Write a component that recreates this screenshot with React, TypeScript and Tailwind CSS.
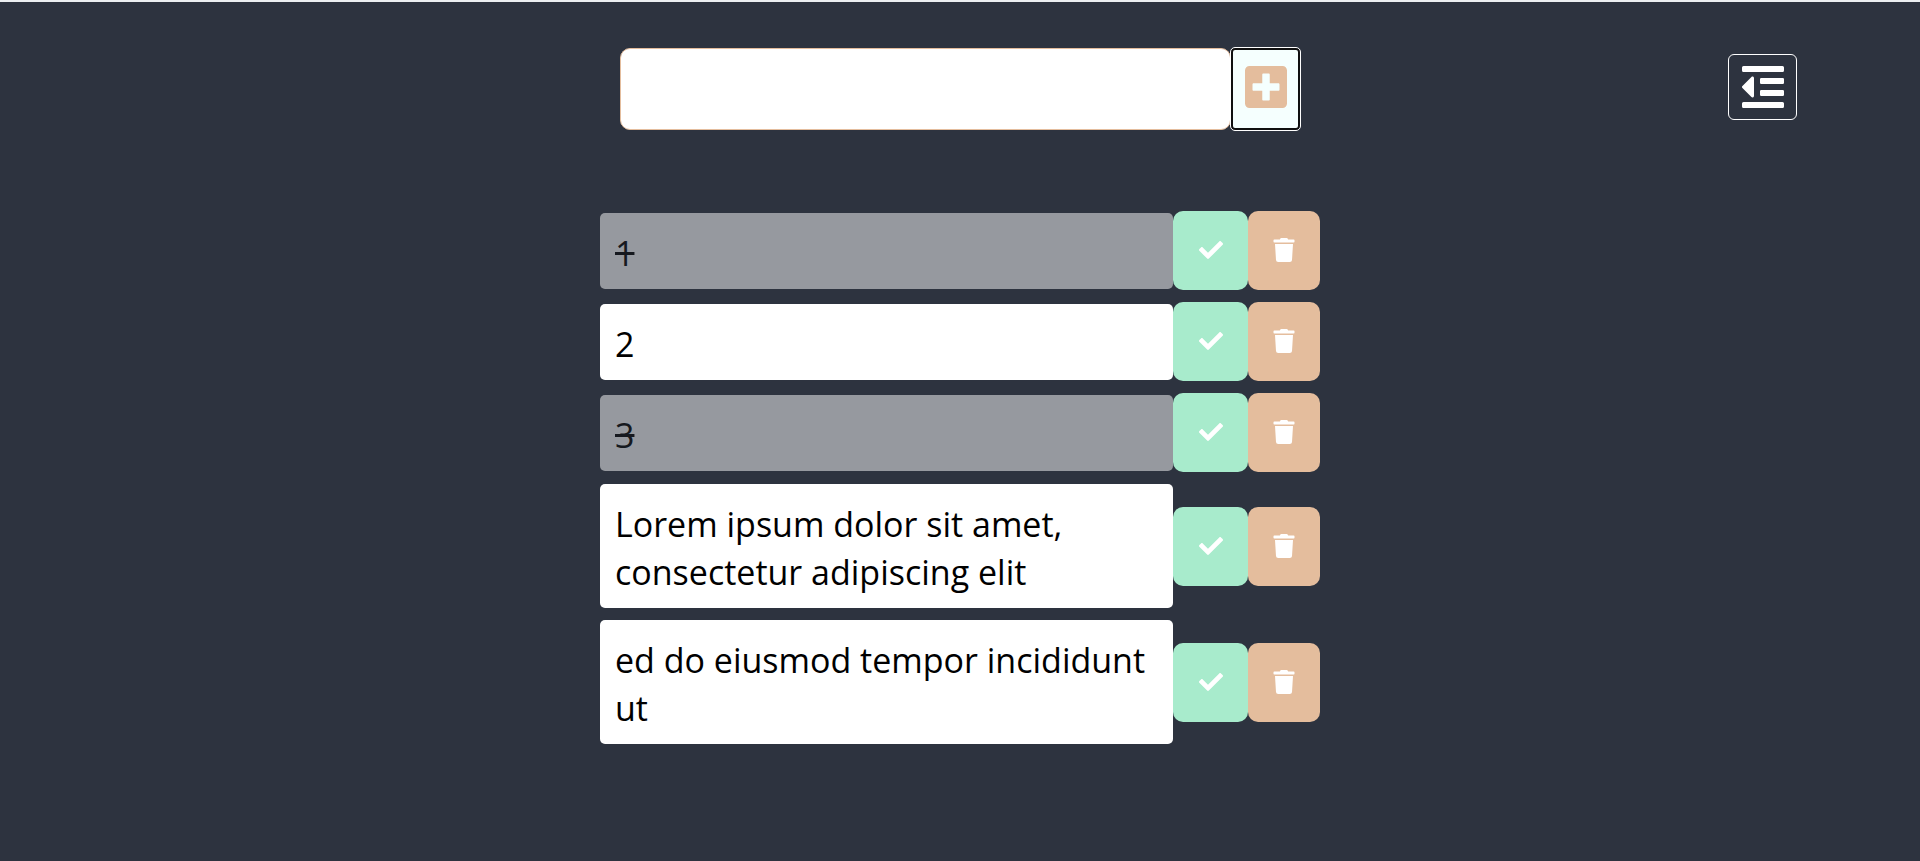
import { useState } from "react";
import type { FormEvent } from "react";
import { FaCheck, FaOutdent, FaPlusSquare, FaTrash } from "react-icons/fa";

type Todo = { id: number; text: string; done: boolean };

const initialTodos: Todo[] = [
  { id: 1, text: "1", done: true },
  { id: 2, text: "2", done: false },
  { id: 3, text: "3", done: true },
  { id: 4, text: "Lorem ipsum dolor sit amet, consectetur adipiscing elit", done: false },
  { id: 5, text: "ed do eiusmod tempor incididunt ut", done: false },
];

function TodoRow({ todo, onToggle, onRemove }: { todo: Todo; onToggle: () => void; onRemove: () => void }) {
  return (
    <li className="flex items-center">
      <p
        className={
          "min-w-0 flex-1 rounded-[5px] bg-white px-[15px] pt-4 pb-3 text-[34px] leading-[48px] text-black " +
          (todo.done ? "line-through opacity-50" : "")
        }
      >
        {todo.text}
      </p>
      <button
        type="button"
        aria-label="Complete"
        onClick={onToggle}
        className="flex h-[79px] w-[75px] shrink-0 items-center justify-center rounded-[10px] bg-[#a8ebcc] pb-px text-2xl text-white"
      >
        <FaCheck />
      </button>
      <button
        type="button"
        aria-label="Delete"
        onClick={onRemove}
        className="flex h-[79px] w-[72px] shrink-0 items-center justify-center rounded-[10px] bg-[#e4bd9d] pb-px text-2xl text-white"
      >
        <FaTrash />
      </button>
    </li>
  );
}

export default function App() {
  const [todos, setTodos] = useState(initialTodos);
  const [draft, setDraft] = useState("");

  const addTodo = (event: FormEvent) => {
    event.preventDefault();
    if (!draft.trim()) return;
    setTodos([...todos, { id: Date.now(), text: draft, done: false }]);
    setDraft("");
  };

  return (
    <div className="min-h-screen border-t-2 border-[#eceff1] bg-[#2d333f] font-['Open_Sans','Noto_Sans',sans-serif]">
      <header className="grid grid-cols-[1fr_680px_1fr] pt-[46px]">
        <form onSubmit={addTodo} className="col-start-2 flex">
          <input
            type="text"
            aria-label="New task"
            value={draft}
            onChange={(event) => setDraft(event.target.value)}
            className="h-[82px] min-w-0 flex-1 rounded-[10px] border border-[#e4bd9d] bg-white px-4 text-[34px] text-black outline-none"
          />
          <button
            type="submit"
            aria-label="Add task"
            className="flex w-[69px] shrink-0 items-center justify-center rounded-[4px] border-2 border-[#101010] bg-[#f5fffe] pb-1 text-5xl text-[#e4bd9d] outline outline-white"
          >
            <FaPlusSquare />
          </button>
        </form>
        <button
          type="button"
          aria-label="Toggle menu"
          className="mt-[6px] mr-[123px] flex h-[66px] w-[69px] items-center justify-center justify-self-end rounded-[6px] border border-white text-5xl text-white"
        >
          <FaOutdent />
        </button>
      </header>
      <main className="mx-auto mt-[81px] max-w-[720px]">
        <ul className="flex flex-col gap-3">
          {todos.map((todo) => (
            <TodoRow
              key={todo.id}
              todo={todo}
              onToggle={() => setTodos(todos.map((t) => (t.id === todo.id ? { ...t, done: !t.done } : t)))}
              onRemove={() => setTodos(todos.filter((t) => t.id !== todo.id))}
            />
          ))}
        </ul>
      </main>
    </div>
  );
}
